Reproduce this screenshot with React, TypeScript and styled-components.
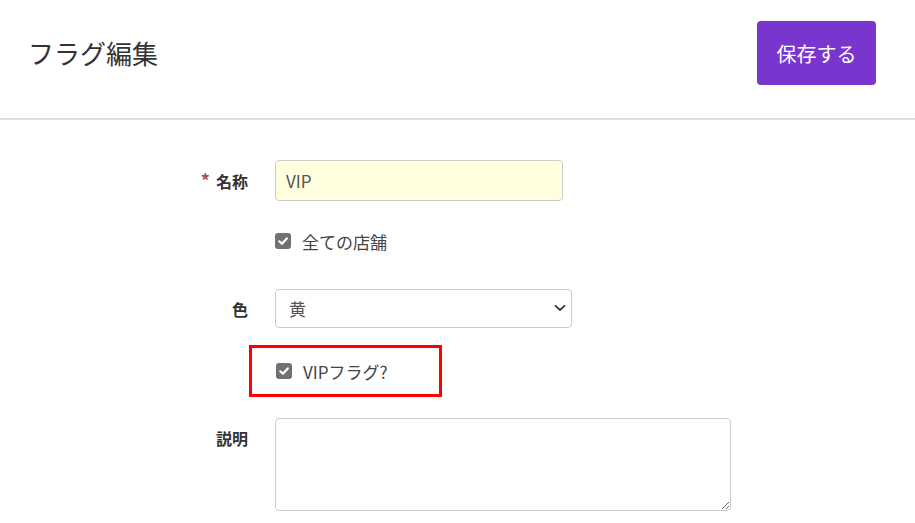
import React from "react";
import styled, { createGlobalStyle } from "styled-components";

const GlobalStyle = createGlobalStyle`
  body {
    margin: 0;
    background: #ffffff;
    font-family: "Noto Sans CJK JP", "Noto Sans", sans-serif;
    color: #333333;
  }
`;

const CheckMark: React.FC = () => (
  <svg width="12" height="12" viewBox="0 0 12 12" fill="none">
    <path d="M2.3 6.3 L4.9 8.8 L9.8 3.4" stroke="#ffffff" strokeWidth="2.2" strokeLinecap="round" strokeLinejoin="round" />
  </svg>
);

const Chevron: React.FC = () => (
  <svg width="12" height="8" viewBox="0 0 12 8" fill="none">
    <path d="M1.5 1.8 L6 6 L10.5 1.8" stroke="#343a40" strokeWidth="1.8" strokeLinecap="round" strokeLinejoin="round" />
  </svg>
);

export default function App() {
  return (
    <>
      <GlobalStyle />
      <SHeader>
        <STitle>フラグ編集</STitle>
        <SSaveButton type="button">保存する</SSaveButton>
      </SHeader>
      <SForm>
        <SRow $mt={40}>
          <SLabel>
            <SRequired>*</SRequired>名称
          </SLabel>
          <STextInput defaultValue="VIP" />
        </SRow>
        <SRow $mt={28}>
          <SLabel $empty />
          <SCheckLine>
            <SCheckBox>
              <CheckMark />
            </SCheckBox>
            全ての店舗
          </SCheckLine>
        </SRow>
        <SRow $mt={36}>
          <SLabel>色</SLabel>
          <SSelectWrap>
            <SSelect defaultValue="yellow">
              <option value="yellow">黄</option>
              <option value="red">赤</option>
              <option value="blue">青</option>
            </SSelect>
            <SSelectIcon>
              <Chevron />
            </SSelectIcon>
          </SSelectWrap>
        </SRow>
        <SRow $mt={16}>
          <SLabel $empty />
          <SHighlight>
            <SCheckLine>
              <SCheckBox>
                <CheckMark />
              </SCheckBox>
              VIPフラグ?
            </SCheckLine>
          </SHighlight>
        </SRow>
        <SRow $mt={21}>
          <SLabel>説明</SLabel>
          <STextArea />
        </SRow>
      </SForm>
    </>
  );
}

const SHeader = styled.header`
  display: flex;
  align-items: center;
  justify-content: space-between;
  height: 120px;
  box-sizing: border-box;
  padding: 21px 39px 33px 28px;
  border-bottom: 2px solid #dddddd;
`;

const STitle = styled.h1`
  margin: 0;
  font-size: 26px;
  font-weight: 400;
  color: #333333;
  line-height: 1.2;
`;

const SSaveButton = styled.button`
  width: 119px;
  height: 64px;
  border: none;
  border-radius: 4px;
  background: #7a35cf;
  color: #ffffff;
  font-family: inherit;
  font-size: 20px;
  cursor: pointer;
`;

const SForm = styled.main`
  display: flex;
  flex-direction: column;
`;

const SRow = styled.div<{ $mt: number }>`
  display: flex;
  align-items: flex-start;
  margin-top: ${(p) => p.$mt}px;
`;

const SLabel = styled.label<{ $empty?: boolean }>`
  flex: 0 0 248px;
  box-sizing: border-box;
  margin-right: 27px;
  text-align: right;
  font-size: 16px;
  font-weight: 700;
  color: #333333;
  line-height: 40px;
  height: ${(p) => (p.$empty ? "0" : "40px")};
`;

const SRequired = styled.span`
  color: #a0545c;
  font-size: 18px;
  margin-right: 6px;
`;

const STextInput = styled.input`
  width: 288px;
  height: 41px;
  box-sizing: border-box;
  padding: 0 10px;
  border: 1px solid #cccccc;
  border-radius: 4px;
  background: #ffffdd;
  font-family: inherit;
  font-size: 17px;
  color: #555555;
  outline: none;
`;

const SCheckLine = styled.div`
  display: flex;
  align-items: center;
  gap: 11px;
  height: 24px;
  font-size: 17px;
  color: #444444;
`;

const SCheckBox = styled.span`
  display: inline-flex;
  align-items: center;
  justify-content: center;
  width: 16px;
  height: 16px;
  border-radius: 3px;
  background: #717171;
  flex-shrink: 0;
`;

const SSelectWrap = styled.div`
  position: relative;
  width: 297px;
  height: 39px;
`;

const SSelect = styled.select`
  width: 100%;
  height: 100%;
  box-sizing: border-box;
  padding: 0 13px;
  appearance: none;
  border: 1px solid #cccccc;
  border-radius: 4px;
  background: #ffffff;
  font-family: inherit;
  font-size: 17px;
  color: #555555;
  outline: none;
`;

const SSelectIcon = styled.span`
  position: absolute;
  right: 6px;
  top: 15px;
  display: flex;
  pointer-events: none;
`;

const SHighlight = styled.div`
  margin-left: -26px;
  width: 193px;
  height: 52px;
  box-sizing: border-box;
  border: 3px solid #ff0000;
  padding: 11px 0 0 24px;
`;

const STextArea = styled.textarea`
  width: 456px;
  height: 93px;
  box-sizing: border-box;
  border: 1px solid #cccccc;
  border-radius: 4px;
  padding: 8px 10px;
  font-family: inherit;
  font-size: 17px;
  color: #555555;
  outline: none;
`;
